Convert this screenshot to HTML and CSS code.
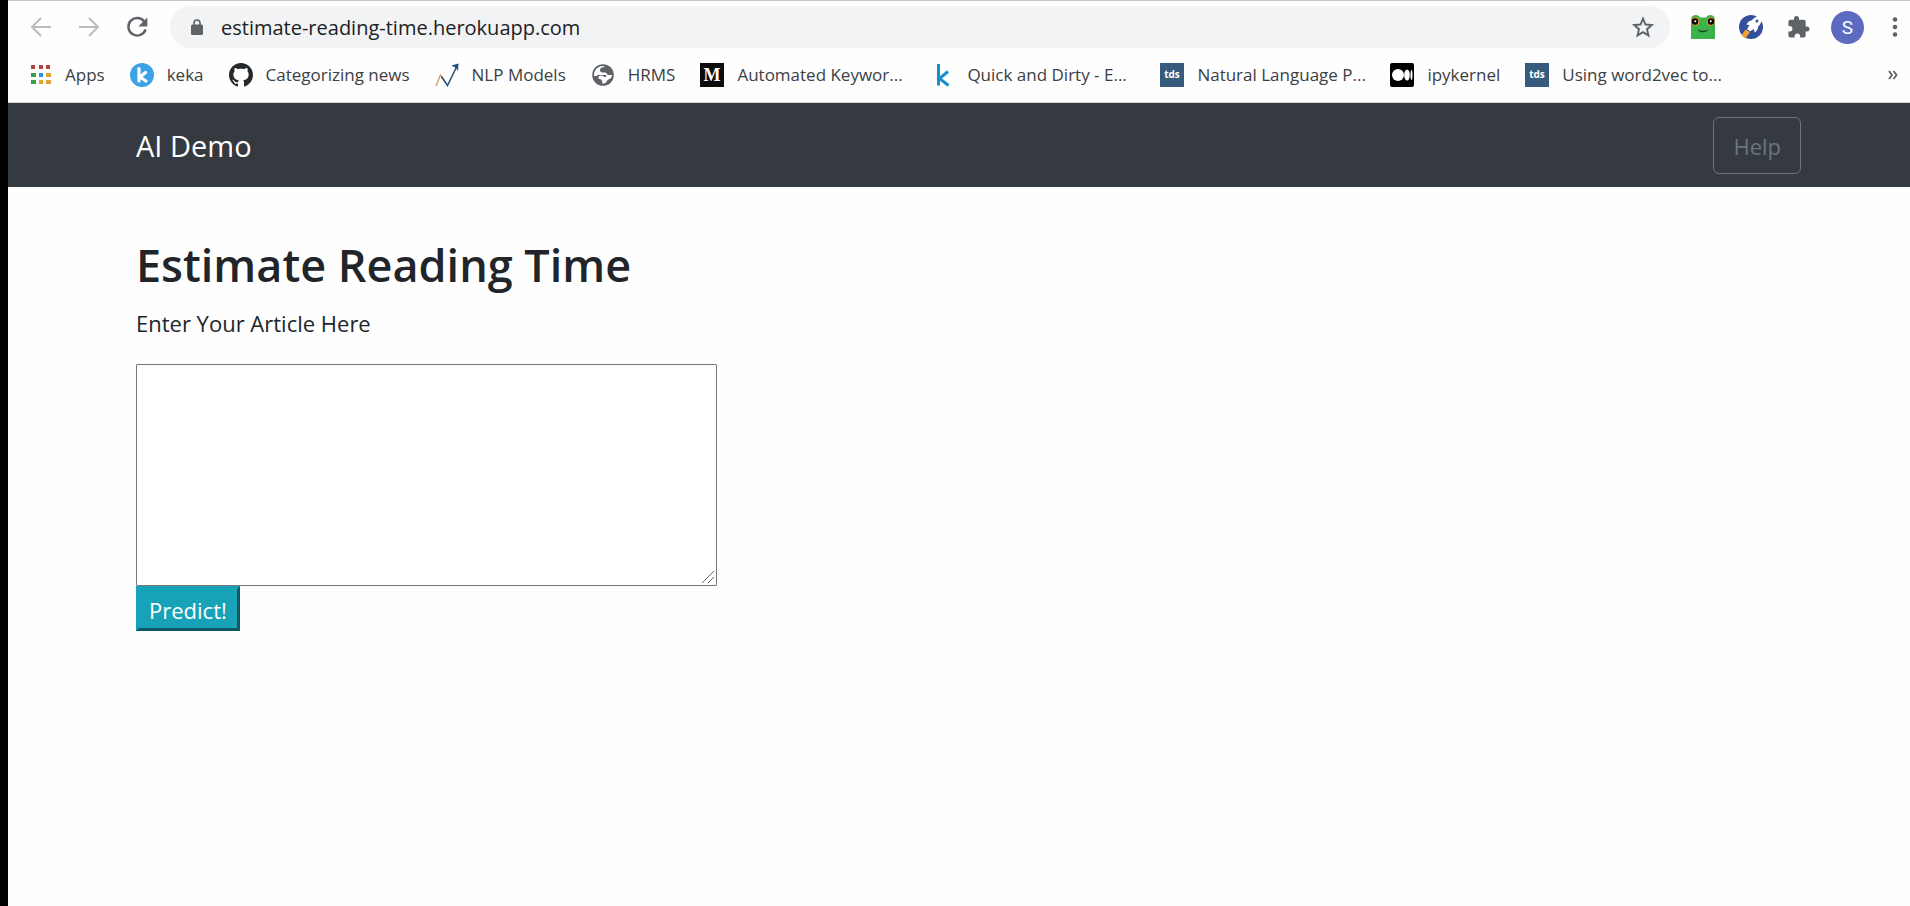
FILE: index.html
```html
<!DOCTYPE html>
<html lang="en">
<head>
<meta charset="utf-8">
<title>Estimate Reading Time</title>
<link rel="stylesheet" href="styles.css">
</head>
<body>
<header class="browser">
  <div class="toolbar">
    <div class="nav-buttons">
      <button class="icon-button faded" aria-label="Back"><svg width="24" height="24" viewBox="0 0 24 24"><path d="M22 12H3M12 3l-9 9 9 9" fill="none" stroke="currentColor" stroke-width="2"/></svg></button>
      <button class="icon-button faded" aria-label="Forward"><svg width="24" height="24" viewBox="0 0 24 24"><path d="M2 12h19M12 3l9 9-9 9" fill="none" stroke="currentColor" stroke-width="2"/></svg></button>
      <button class="icon-button" aria-label="Reload"><svg width="24" height="24" viewBox="0 0 24 24"><path d="M19.6 7A8.800 8.800 0 1 0 20.600 14.400" fill="none" stroke="currentColor" stroke-width="2.400"/><path d="M22.300 2.500v9h-9z" fill="currentColor"/></svg></button>
    </div>
    <div class="omnibox">
      <svg class="lock" width="12" height="16" viewBox="0 0 12 16"><path d="M3 7V4a3 3 0 0 1 6 0v3" fill="none" stroke="currentColor" stroke-width="1.600"/><rect y="5.500" width="12" height="10.500" rx="1.500" fill="currentColor"/></svg>
      <input class="address" type="text" aria-label="Address" value="estimate-reading-time.herokuapp.com">
      <button class="icon-button" aria-label="Bookmark this page"><svg width="24" height="24" viewBox="0 0 24 24"><path d="M12 3.600l2.500 5.900 6.300.5-4.800 4.200 1.500 6.200-5.500-3.300-5.500 3.300L8 14.200 3.200 10l6.300-.5z" fill="none" stroke="currentColor" stroke-width="1.900"/></svg></button>
    </div>
    <div class="extensions">
      <button class="icon-button" aria-label="Frog extension"><svg width="24" height="24" viewBox="0 0 24 24"><path d="M0 4Q1 0 5 0q3 0 4 2.500h6Q16 0 19 0q4 0 5 4v20H0z" fill="#3bb34a"/><circle cx="4.300" cy="6.500" r="4.200" fill="#f08a32"/><circle cx="19.700" cy="6.500" r="4.200" fill="#f08a32"/><circle cx="4" cy="6.500" r="3.200" fill="#080808"/><circle cx="20" cy="6.500" r="3.200" fill="#080808"/><circle cx="4.300" cy="6.300" r="1" fill="#fff"/><circle cx="19.700" cy="6.300" r="1" fill="#fff"/><path d="M6.500 14.500q5.500 2.600 11 0-1.500 2.700-5.500 2.700t-5.500-2.700z" fill="#16402a"/></svg></button>
      <button class="icon-button" aria-label="Rocket extension"><svg width="24" height="24" viewBox="0 0 24 24"><circle cx="12" cy="12" r="12" fill="#34509c"/><path d="M2.500 20.500L6.500 14.500l4.500 2.500-4.500 6.500z" fill="#f0a12e"/><path d="M24 0q-7 .3-11.500 5.500-3.500.5-5 4l3 .7-2.500 3.800 3 2.300 4-2.300.5 3.500q3.300-2 3.500-5.500Q23.500 7 24 0z" fill="#fff"/><circle cx="18" cy="6" r="1.500" fill="#34509c"/></svg></button>
      <button class="icon-button" aria-label="Extensions"><svg width="24" height="24" viewBox="0 0 24 24"><path d="M20 11.500h-1.300V6.800a2 2 0 0 0-2-2H12V3.500a2.500 2.500 0 0 0-5 0v1.300H3.400a2 2 0 0 0-2 2v4.300h1.300a2.700 2.700 0 0 1 0 5.400H1.400v4a2 2 0 0 0 2 2h4.300v-1.300a2.700 2.700 0 0 1 5.400 0v1.300h3.600a2 2 0 0 0 2-2v-4H20a2.500 2.500 0 0 0 0-5z" fill="currentColor"/></svg></button>
      <button class="avatar" aria-label="Profile">S</button>
      <button class="icon-button menu" aria-label="Menu"><svg width="6" height="20" viewBox="0 0 6 20"><g fill="currentColor"><circle cx="3" cy="2.500" r="2.300"/><circle cx="3" cy="10" r="2.300"/><circle cx="3" cy="17.500" r="2.300"/></g></svg></button>
    </div>
  </div>
  <nav class="bookmarks" aria-label="Bookmarks">
    <a class="bookmark" href="#"><svg width="22" height="24" viewBox="0 0 22 24"><path d="M1 2h4v4H1zM9 2h4v4H9zM16 2h4v4h-4z" fill="#b0453b"/><path d="M1 10h5v4H1zM1 17h5v4H1z" fill="#38a04b"/><path d="M9 10h4v4H9z" fill="#2a92dc"/><path d="M16 10h5v4h-5zM9 17h4v4H9zM16 17h5v4h-5z" fill="#e2a034"/></svg><span class="label">Apps</span></a>
    <a class="bookmark" href="#"><svg width="24" height="24" viewBox="0 0 24 24"><circle cx="12" cy="12" r="12" fill="#3ba2e6"/><path d="M9 5.500v12.500M15.500 9.500L10 14l6 4" fill="none" stroke="#fff" stroke-width="3.200" stroke-linecap="round" stroke-linejoin="round"/></svg><span class="label">keka</span></a>
    <a class="bookmark" href="#"><svg width="24" height="24" viewBox="0 0 16 16"><path fill="#24292e" d="M8 0C3.580 0 0 3.580 0 8c0 3.540 2.290 6.530 5.470 7.590.4.070.55-.17.55-.38 0-.19-.01-.82-.01-1.490-2.010.37-2.530-.49-2.690-.94-.09-.23-.48-.94-.82-1.130-.28-.15-.68-.52-.01-.53.63-.01 1.080.58 1.230.82.72 1.210 1.870.87 2.330.66.07-.52.28-.87.510-1.070-1.780-.2-3.640-.89-3.640-3.950 0-.87.310-1.590.82-2.150-.08-.2-.36-1.020.08-2.120 0 0 .67-.21 2.200.82.64-.18 1.320-.27 2-.27s1.360.09 2 .27c1.530-1.040 2.200-.82 2.200-.82.44 1.100.16 1.920.08 2.120.51.56.82 1.270.82 2.150 0 3.070-1.870 3.750-3.650 3.950.29.25.54.73.54 1.480 0 1.070-.01 1.930-.01 2.200 0 .21.150.46.55.38A8.010 8.010 0 0 0 16 8c0-4.420-3.580-8-8-8z"/></svg><span class="label">Categorizing news</span></a>
    <a class="bookmark" href="#"><svg width="24" height="24" viewBox="0 0 24 24"><path d="M1 23L5.500 12l2 3" fill="none" stroke="#d99a5b" stroke-width="1.300"/><path d="M6.500 13.500l6 9L22 3" fill="none" stroke="#234d7a" stroke-width="1.500"/><path d="M16.500 2.500L23.500.5 23 8l-2-3z" fill="#234d7a"/></svg><span class="label">NLP Models</span></a>
    <a class="bookmark" href="#"><svg width="24" height="24" viewBox="0 0 24 24"><circle cx="12" cy="12" r="10.800" fill="#5f6368"/><path d="M14 4q-5 0-5 3 0 2 2 2.500h3.500q2 1 2 2.500h4.500q0 3-3.500 4.500-1.500.5-2.500 3-2 1.500-3.500 1l-.5-3q-.5-1.500-2.500-1.500-1 0-1-1.500 0-2 2-2 3.500 0 3.500 1.500h1.500q2-1 0-2H9.500Q6 11 6 13H3q-.5-7 6-9.500 3-1 5 .5z" fill="#fff"/></svg><span class="label">HRMS</span></a>
    <a class="bookmark" href="#"><svg width="24" height="24" viewBox="0 0 24 24"><rect width="24" height="24" fill="#0c0c0c"/><text x="12" y="18" class="glyph-m">M</text></svg><span class="label clipped">Automated Keywor...</span></a>
    <a class="bookmark" href="#"><svg width="24" height="24" viewBox="0 0 24 24"><path d="M8.500 1v21.500M18 8.500l-8.500 7 9 7" fill="none" stroke="#1590cb" stroke-width="3"/></svg><span class="label clipped">Quick and Dirty - E...</span></a>
    <a class="bookmark" href="#"><svg width="24" height="24" viewBox="0 0 24 24"><rect width="24" height="24" fill="#375b7d"/><text x="12" y="15" class="glyph-tds">tds</text></svg><span class="label clipped">Natural Language P...</span></a>
    <a class="bookmark" href="#"><svg width="24" height="24" viewBox="0 0 24 24"><rect width="24" height="24" rx="2" fill="#000"/><circle cx="8" cy="12" r="6" fill="#fff"/><ellipse cx="17" cy="12" rx="2.800" ry="5.500" fill="#fff"/><ellipse cx="21.500" cy="12" rx="1" ry="5" fill="#fff"/></svg><span class="label">ipykernel</span></a>
    <a class="bookmark" href="#"><svg width="24" height="24" viewBox="0 0 24 24"><rect width="24" height="24" fill="#375b7d"/><text x="12" y="15" class="glyph-tds">tds</text></svg><span class="label clipped">Using word2vec to...</span></a>
    <button class="icon-button overflow" aria-label="More bookmarks"><svg width="10" height="10" viewBox="0 0 10 10"><path d="M1 1l3 4-3 4M5.500 1l3 4-3 4" fill="none" stroke="currentColor" stroke-width="1.800"/></svg></button>
  </nav>
</header>
<div class="navbar">
  <a class="brand" href="#">AI Demo</a>
  <button class="help">Help</button>
</div>
<main class="content">
  <h1 class="title">Estimate Reading Time</h1>
  <form class="form">
    <label class="prompt" for="article">Enter Your Article Here</label>
    <textarea class="article" id="article"></textarea>
    <button class="predict" type="button">Predict!</button>
  </form>
</main>
</body>
</html>
```

FILE: styles.css
```css
* {
  box-sizing: border-box;
}

body {
  margin: 0;
  min-height: 100vh;
  border-left: 8px solid #000;
  background: #fefefe;
  color: #212529;
  font-family: "Open Sans", "Noto Sans", sans-serif;
  font-size: 22px;
  line-height: 36px;
}

button,
input,
textarea {
  font: inherit;
}

.browser {
  border-top: 1px solid #c8c8c8;
  border-bottom: 1px solid #d5d8dc;
  color: #5f6368;
}

.toolbar {
  display: flex;
  align-items: center;
  padding: 5px 12px 4px 21px;
}

.nav-buttons {
  display: flex;
  gap: 24px;
  margin-right: 21px;
}

.icon-button {
  display: flex;
  padding: 0;
  border: 0;
  background: none;
  color: #5f6368;
}

.faded {
  color: #babcbe;
}

.omnibox {
  display: flex;
  flex: 1;
  align-items: center;
  height: 42px;
  padding: 0 15px 0 21px;
  border-radius: 21px;
  background: #f1f3f4;
}

.address {
  flex: 1;
  margin-left: 18px;
  padding: 2px 0 0;
  border: 0;
  outline: 0;
  background: none;
  color: #202124;
  font-size: 20px;
}

.extensions {
  display: flex;
  align-items: center;
  gap: 24px;
  margin-left: 21px;
}

.avatar {
  width: 33px;
  height: 33px;
  margin: 0 4px 0 -4px;
  padding: 0;
  border: 0;
  border-radius: 50%;
  background: #5c6bc0;
  color: #fff;
  font-family: Roboto, sans-serif;
  font-size: 19px;
  line-height: 33px;
}

.bookmarks {
  display: flex;
  align-items: center;
  gap: 25px;
  height: 50px;
  padding: 0 12px 4px 22px;
}

.bookmark {
  display: flex;
  align-items: center;
  gap: 13px;
  color: #3c4043;
  font-size: 17px;
  line-height: 24px;
  text-decoration: none;
  white-space: nowrap;
}

.clipped {
  width: 168px;
}

.overflow {
  margin-left: auto;
}

.glyph-m {
  fill: #fff;
  font: bold 18px "Liberation Serif", serif;
  text-anchor: middle;
}

.glyph-tds {
  fill: #fff;
  font: bold 10px "Open Sans", sans-serif;
  text-anchor: middle;
}

.navbar {
  display: flex;
  align-items: center;
  justify-content: space-between;
  height: 84px;
  padding: 0 109px 0 128px;
  background: #343a40;
}

.brand {
  padding-top: 2px;
  color: #fff;
  font-size: 29px;
  text-decoration: none;
}

.help {
  height: 57px;
  padding: 2px 19px 0;
  border: 1px solid #6c757d;
  border-radius: 6px;
  background: none;
  color: #6c757d;
}

.content {
  padding: 49px 128px;
}

.title {
  margin: 0 0 11px;
  font-size: 45px;
  font-weight: 600;
  line-height: 58px;
}

.form {
  display: flex;
  flex-direction: column;
  align-items: flex-start;
}

.prompt {
  margin-bottom: 23px;
}

.article {
  width: 581px;
  height: 222px;
  border: 1px solid #767676;
  border-radius: 1px;
  background: #fff;
}

.article::-webkit-scrollbar {
  width: 16px;
  height: 16px;
}

.article::-webkit-resizer {
  background: url("data:image/svg+xml,%3Csvg xmlns='http://www.w3.org/2000/svg' width='16' height='16'%3E%3Cpath d='M2 14L14 2M8 14l6-6' stroke='%23666'/%3E%3C/svg%3E") no-repeat right bottom;
}

.predict {
  height: 45px;
  padding: 2px 10px 0;
  border: 3px outset #17a2b8;
  border-top-color: #17a2b8;
  border-left-color: #17a2b8;
  background: #17a2b8;
  color: #fff;
}
```
